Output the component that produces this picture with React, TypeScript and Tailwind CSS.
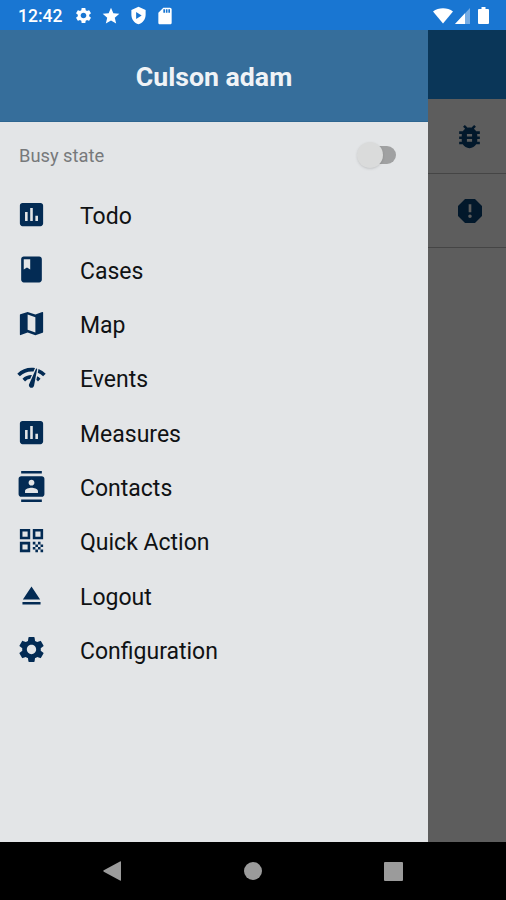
import React from "react";
import {
  MdAssessment,
  MdBook,
  MdBugReport,
  MdContacts,
  MdEject,
  MdMap,
  MdNetworkCheck,
  MdQrCode,
  MdReport,
  MdSdCard,
  MdSettings,
  MdStar,
} from "react-icons/md";

const items = [
  { label: "Todo", icon: MdAssessment },
  { label: "Cases", icon: MdBook },
  { label: "Map", icon: MdMap },
  { label: "Events", icon: MdNetworkCheck },
  { label: "Measures", icon: MdAssessment },
  { label: "Contacts", icon: MdContacts },
  { label: "Quick Action", icon: MdQrCode },
  { label: "Logout", icon: MdEject },
  { label: "Configuration", icon: MdSettings },
];

function StatusBar() {
  return (
    <header className="flex h-[30px] shrink-0 items-center bg-[#1976d2] pl-[18px] pr-[17px] pt-px text-white">
      <span className="w-[56px] pt-[2px] text-[17.5px] font-medium leading-none">12:42</span>
      <MdSettings size={19} />
      <MdStar size={20} className="ml-[8px]" />
      <svg viewBox="0 0 24 24" className="ml-[8px] size-[19px]" fill="currentColor" fillRule="evenodd">
        <path d="M12 1 3 5v6c0 5.500 3.800 10.700 9 12 5.200-1.300 9-6.500 9-12V5zM9 7.500l7 4.500-7 4.500z" />
      </svg>
      <MdSdCard size={20} className="ml-[7px]" />
      <div className="ml-auto flex items-center">
        <svg viewBox="0 0 20 16" className="h-[16px] w-[20px]" fill="currentColor">
          <path d="M0 3.5C5.5-.8 14.5-.8 20 3.5L10 15.5z" />
        </svg>
        <svg viewBox="0 0 15 16" className="ml-[2px] h-[16px] w-[15px]" fill="currentColor">
          <path d="M15 0v16H0z" opacity=".4" />
          <path d="M10 5.3V16H0z" />
        </svg>
        <svg viewBox="0 0 11 17" className="ml-[8px] h-[17px] w-[11px]" fill="currentColor">
          <path d="M3.5 0h4v2H10q1 0 1 1v13q0 1-1 1H1q-1 0-1-1V3q0-1 1-1h2.500z" />
        </svg>
      </div>
    </header>
  );
}

function Drawer() {
  return (
    <aside className="flex w-[428px] shrink-0 flex-col bg-[#e3e5e7]">
      <div className="flex h-[92px] shrink-0 items-center justify-center border-b border-[#2d6590] bg-[#366e9b] pt-[4px]">
        <h1 className="text-[26.7px] font-bold leading-none text-[#f0f3f6]">Culson adam</h1>
      </div>
      <div className="flex h-[67px] shrink-0 items-center justify-between pl-[19px] pr-[32px]">
        <span className="text-[18.3px] text-[#77797b]">Busy state</span>
        <div className="relative -mt-[2px] h-[18px] w-[33px] rounded-full bg-[#a0a1a2]">
          <span className="absolute -left-[6px] -top-[4px] size-[26px] rounded-full bg-[#dadbdb] shadow-sm" />
        </div>
      </div>
      <nav>
        {items.map(({ label, icon: Icon }) => (
          <a key={label} className="flex h-[54.375px] items-center pl-[16px]">
            <Icon size={31} className="-mt-[3px] text-[#032b54]" />
            <span className="ml-[33px] pt-px text-[23px] leading-none text-[#101214]">{label}</span>
          </a>
        ))}
      </nav>
    </aside>
  );
}

export default function App() {
  return (
    <div className="flex h-[900px] w-[506px] flex-col overflow-hidden bg-black font-['Roboto',sans-serif]">
      <StatusBar />
      <main className="flex h-[812px] shrink-0">
        <Drawer />
        <section className="flex-1 bg-[#5d5d5d] text-[#02182b]">
          <div className="h-[69px] bg-[#0a3658]" />
          <div className="flex h-[75px] items-center border-b border-[#454545] pl-[26px]">
            <MdBugReport size={31} />
          </div>
          <div className="flex h-[74px] items-center border-b border-[#454545] pl-[26px]">
            <MdReport size={32} />
          </div>
        </section>
      </main>
      <footer className="flex flex-1 items-center justify-between pl-[103px] pr-[103px] text-[#9b9b9b]">
        <svg viewBox="0 0 18 20" className="h-[20px] w-[18px]" fill="currentColor">
          <path d="M17 .4q1-.6 1 .6v18q0 1.200-1 .6L.8 10.700q-1-.7 0-1.400z" />
        </svg>
        <span className="size-[18px] rounded-full bg-[#9b9b9b]" />
        <span className="size-[19px] rounded-[1px] bg-[#9b9b9b]" />
      </footer>
    </div>
  );
}
